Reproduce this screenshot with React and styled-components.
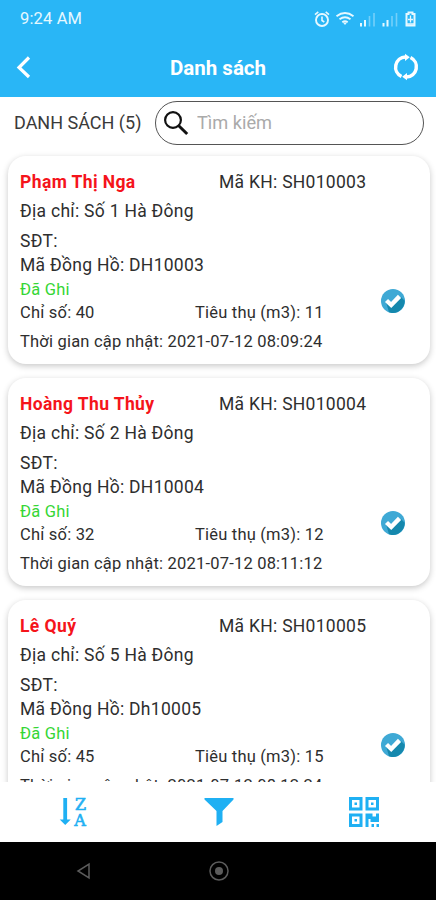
import React from 'react';
import styled, { createGlobalStyle } from 'styled-components';

const GlobalStyle = createGlobalStyle`
  * {
    box-sizing: border-box;
  }

  body {
    margin: 0;
    background: #fff;
    font-family: Roboto, 'Noto Sans', sans-serif;
  }
`;

const Screen = styled.div`
  display: flex;
  flex-direction: column;
  width: 436px;
  height: 900px;
  overflow: hidden;
  background: #fff;
`;

const StatusBar = styled.div`
  display: flex;
  align-items: center;
  justify-content: space-between;
  flex: none;
  height: 38px;
  padding: 0 18px 0 20px;
  background: #29b6f6;
  color: #e6f8ff;
`;

const Clock = styled.span`
  font-size: 16.5px;
  line-height: 38px;
  letter-spacing: 0.15px;
`;

const Header = styled.header`
  display: grid;
  grid-template-columns: 60px 1fr 60px;
  align-items: center;
  flex: none;
  height: 59px;
  background: #29b6f6;
`;

const HeaderIcon = styled.span`
  display: flex;
  justify-content: ${(props) => (props.$end ? 'flex-end' : 'flex-start')};
  padding: ${(props) => (props.$end ? '0 16px 1px 0' : '0 0 2px 15px')};
`;

const HeaderTitle = styled.h1`
  margin: 0;
  color: #fff;
  font-size: 20.5px;
  font-weight: bold;
  text-align: center;
`;

const SearchRow = styled.div`
  display: flex;
  align-items: center;
  flex: none;
  height: 53px;
  padding: 0 12px 2px 14px;
`;

const ListCount = styled.span`
  width: 141px;
  color: #3a3a3a;
  font-size: 18px;
  white-space: nowrap;
`;

const SearchBox = styled.label`
  display: flex;
  align-items: center;
  flex: 1;
  height: 44px;
  padding-left: 7px;
  border: 1px solid #555;
  border-radius: 22px;
`;

const SearchInput = styled.input`
  width: 200px;
  margin-left: 8px;
  padding: 0;
  border: 0;
  outline: none;
  background: transparent;
  font-family: inherit;
  font-size: 18.2px;

  &::placeholder {
    color: #aaa;
  }
`;

const List = styled.main`
  display: flex;
  flex-direction: column;
  flex: 1;
  gap: 14px;
  min-height: 0;
  padding: 6px 6px 0 8px;
  overflow: hidden;
`;

const Card = styled.article`
  display: flex;
  flex-direction: column;
  flex: none;
  height: 208px;
  padding: 16px 12px 0;
  border-radius: 18px;
  background: #fff;
  box-shadow: 0 2px 6px rgba(0, 0, 0, 0.22);
`;

const Line = styled.div`
  display: flex;
  flex: none;
  height: ${(props) => props.$height || 20}px;
  margin-top: ${(props) => props.$gap || 0}px;
  color: ${(props) => props.$color || '#2e2e2e'};
  font-size: ${(props) => (props.$small ? 16.5 : 17.5)}px;
  line-height: ${(props) => props.$height || 20}px;
  letter-spacing: ${(props) => (props.$small ? 0.2 : 0.28)}px;
  white-space: nowrap;
`;

const Name = styled.span`
  width: 199px;
  color: #f5141b;
  font-weight: bold;
  letter-spacing: 0.4px;
`;

const Reading = styled.span`
  width: 175px;
`;

const CardBody = styled.div`
  display: flex;
  justify-content: space-between;
`;

const CheckHolder = styled.span`
  padding: 96px 13px 0 0;
  height: 120px;
`;

const BottomBar = styled.footer`
  display: grid;
  grid-template-columns: 145px 147px 144px;
  place-items: center;
  flex: none;
  height: 60px;
  background: #fff;
`;

const SystemNav = styled.nav`
  display: grid;
  grid-template-columns: 167px 103px 1fr;
  place-items: center;
  flex: none;
  height: 58px;
  background: #000;
`;

const meters = [
  {
    name: 'Phạm Thị Nga',
    code: 'SH010003',
    address: 'Số 1 Hà Đông',
    meter: 'DH10003',
    index: 40,
    usage: 11,
    updated: '2021-07-12 08:09:24',
  },
  {
    name: 'Hoàng Thu Thủy',
    code: 'SH010004',
    address: 'Số 2 Hà Đông',
    meter: 'DH10004',
    index: 32,
    usage: 12,
    updated: '2021-07-12 08:11:12',
  },
  {
    name: 'Lê Quý',
    code: 'SH010005',
    address: 'Số 5 Hà Đông',
    meter: 'Dh10005',
    index: 45,
    usage: 15,
    updated: '2021-07-12 08:12:24',
  },
];

function StatusIcons() {
  return (
    <svg width="104" height="18" viewBox="0 0 104 18" fill="none" stroke="#e6f8ff">
      <circle cx="8" cy="10" r="6" strokeWidth="1.9" />
      <path d="M8 6.5v4l2.3 1.5M1 4.6l3.3-2.8M15 4.6l-3.3-2.8" strokeWidth="1.6" />
      <path d="M22.5 6.2q8.500-6.400 17 0M25.500 9.300q5.500-4 11 0M28.300 12.200q2.700-1.900 5.400 0" strokeWidth="1.9" />
      <path d="M29 12.500h4l-2 2.500z" fill="#e6f8ff" stroke="none" />
      <path d="M47 13v3.500M51 10v6.500M69.500 13v3.500M73.500 10v6.500" strokeWidth="2" />
      <path d="M55.500 6v10.500M60 3v13.500M78 6v10.500M82.500 3v13.500" strokeWidth="1.6" opacity="0.4" />
      <path d="M92.500 4h2V2.500h4V4h2v11.500h-8z" strokeWidth="2" />
      <path d="M96.500 5.500v4M94 9.500h5M96.500 10v2.500M93 14h7" strokeWidth="1.3" />
    </svg>
  );
}

function BackIcon() {
  return (
    <svg width="18" height="24" viewBox="0 0 18 24" fill="none">
      <path d="M14 2.500L4 12.500l10 9.500" stroke="#fff" strokeWidth="3.200" />
    </svg>
  );
}

function RefreshIcon() {
  return (
    <svg width="28" height="28" viewBox="0 0 28 28" fill="none">
      <path
        d="M9.500 23.500A10.300 10.300 0 0 1 13.500 3.900M18.500 4.500A10.300 10.300 0 0 1 14.500 24.100"
        stroke="#fff"
        strokeWidth="3.500"
      />
      <path d="M13 0.800l4.800 3.400-4.800 3.800zM15 27.200l-4.800-3.400 4.800-3.800z" fill="#fff" />
    </svg>
  );
}

function SearchIcon() {
  return (
    <svg width="26" height="26" viewBox="0 0 26 26" fill="none" stroke="#111">
      <circle cx="10" cy="10" r="7.9" strokeWidth="2.2" />
      <path d="M15.500 15.500l8.700 8.500" strokeWidth="3" />
    </svg>
  );
}

function CheckIcon() {
  return (
    <svg width="24" height="24" viewBox="0 0 24 24">
      <circle cx="12" cy="12" r="12" fill="#3fa9d5" />
      <path d="M20 8l3.700 3.800A12 12 0 0 1 12 24c-1.500 0-3-.3-4-.8L5 13l6 3z" fill="#1588ad" />
      <path d="M5.500 11.500l4.700 4.500 8.300-8.600" fill="none" stroke="#fff" strokeWidth="4.4" />
    </svg>
  );
}

function SortIcon() {
  return (
    <svg width="28" height="34" viewBox="0 0 28 34" fill="#1fb0f3" overflow="visible">
      <path d="M4.300 3h3.800v21.500h3.600l-5.500 5.500-5.500-5.500h3.600z" />
      <g fontFamily="DejaVu Serif" fontSize="16" stroke="#1fb0f3" strokeWidth="0.6">
        <text x="16" y="14.5">Z</text>
        <text x="15.2" y="30.5">A</text>
      </g>
    </svg>
  );
}

function FilterIcon() {
  return (
    <svg width="30" height="30" viewBox="0 0 30 30">
      <path d="M0.500 1h29v1.500L18.500 14v11l-6 4V14L0.500 2.500z" fill="#1fb0f3" />
    </svg>
  );
}

function QrIcon() {
  return (
    <svg width="30" height="30" viewBox="0 0 30 30">
      <path
        d="M1.500 1.500h10.500v10.500h-10.500zM18 1.500h10.500v10.500h-10.500zM1.500 18h10.500v10.500h-10.500z"
        fill="none"
        stroke="#1fb0f3"
        strokeWidth="3"
      />
      <path
        d="M5.500 5.500h2.500v2.500h-2.500zM22 5.500h2.500v2.500h-2.500zM5.500 22h2.500v2.500h-2.500zM16.500 16.500h7v3h3.500v-3h3v8.500h-8.500v-3h-2v8h-3zM22.500 27h2.500v3h-2.500zM27.500 27h2.500v3h-2.500z"
        fill="#1fb0f3"
      />
    </svg>
  );
}

function MeterCard({ item }) {
  return (
    <Card>
      <Line $height={21}>
        <Name>{item.name}</Name>
        <span>Mã KH: {item.code}</span>
      </Line>
      <CardBody>
        <div>
          <Line $gap={8}>Địa chỉ: {item.address}</Line>
          <Line $gap={10} $height={21}>SĐT:</Line>
          <Line $gap={3}>Mã Đồng Hồ: {item.meter}</Line>
          <Line $gap={5} $small $color="#35d635">Đã Ghi</Line>
          <Line $gap={3} $height={19} $small>
            <Reading>Chỉ số: {item.index}</Reading>
            <span>Tiêu thụ (m3): {item.usage}</span>
          </Line>
        </div>
        <CheckHolder>
          <CheckIcon />
        </CheckHolder>
      </CardBody>
      <Line $gap={10} $small>Thời gian cập nhật: {item.updated}</Line>
    </Card>
  );
}

export default function App() {
  return (
    <Screen>
      <GlobalStyle />
      <StatusBar>
        <Clock>9:24 AM</Clock>
        <StatusIcons />
      </StatusBar>
      <Header>
        <HeaderIcon>
          <BackIcon />
        </HeaderIcon>
        <HeaderTitle>Danh sách</HeaderTitle>
        <HeaderIcon $end>
          <RefreshIcon />
        </HeaderIcon>
      </Header>
      <SearchRow>
        <ListCount>DANH SÁCH (5)</ListCount>
        <SearchBox>
          <SearchIcon />
          <SearchInput placeholder="Tìm kiếm" />
        </SearchBox>
      </SearchRow>
      <List>
        {meters.map((item) => (
          <MeterCard key={item.code} item={item} />
        ))}
      </List>
      <BottomBar>
        <SortIcon />
        <FilterIcon />
        <QrIcon />
      </BottomBar>
      <SystemNav>
        <svg width="16" height="18" viewBox="0 0 16 18" fill="none" stroke="#5c5c5c" strokeWidth="1.5">
          <path d="M13 2v14L2 9z" />
        </svg>
        <svg width="20" height="20" viewBox="0 0 20 20" fill="none" stroke="#5c5c5c" strokeWidth="1.5">
          <circle cx="10" cy="10" r="9" />
          <circle cx="10" cy="10" r="4" fill="#5c5c5c" stroke="none" />
        </svg>
      </SystemNav>
    </Screen>
  );
}
